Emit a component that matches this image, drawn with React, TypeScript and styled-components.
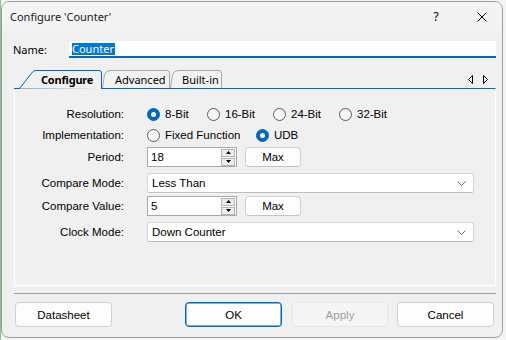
import React from 'react';
import styled, { createGlobalStyle } from 'styled-components';

const uiFont = `'Noto Sans', 'Open Sans', sans-serif`;
const formFont = `'Liberation Sans', Arial, sans-serif`;
const accent = '#0067c0';

const GlobalStyle = createGlobalStyle`
  html, body {
    margin: 0;
    padding: 0;
  }
  body {
    width: 506px;
    height: 340px;
    overflow: hidden;
    background: linear-gradient(to right, #8fbf8f 0, #8fbf8f 1px, #f4f6f4 1px);
    font-family: ${formFont};
  }
`;

const Window = styled.div`
  box-sizing: border-box;
  width: 502px;
  height: 337px;
  margin: 1px 0 0 1px;
  border: 1px solid #9a9a9a;
  border-radius: 8px;
  background: #f0f0f0;
  overflow: hidden;
  display: flex;
  flex-direction: column;
`;

const TitleBar = styled.div`
  flex: none;
  height: 29px;
  display: flex;
  align-items: center;
  padding-left: 8px;
  background: #f3f3f3;
`;

const Title = styled.div`
  flex: 1;
  font: 11px ${uiFont};
  color: #1a1a1a;
`;

const CaptionButton = styled.div<{ $mr?: number }>`
  width: 40px;
  height: 29px;
  margin-right: ${({ $mr }) => $mr ?? 0}px;
  display: flex;
  align-items: center;
  justify-content: center;
  font: 12px ${uiFont};
  color: #000;
`;

const Body = styled.div`
  flex: 1;
  display: flex;
  flex-direction: column;
  padding: 10px 6px 9px 12px;
`;

const NameRow = styled.div`
  height: 17px;
  display: flex;
  align-items: center;
`;

const NameLabel = styled.div`
  width: 55px;
  margin-left: -1px;
  font: 11px ${uiFont};
  color: #000;
`;

const NameInput = styled.div`
  box-sizing: border-box;
  flex: 1;
  height: 17px;
  margin-left: 1px;
  padding-left: 3px;
  display: flex;
  align-items: center;
  background: #fff;
  border-bottom: 2px solid ${accent};
`;

const Selected = styled.span`
  background: #0078d7;
  color: #fff;
  font: 11px ${uiFont};
  line-height: 12px;
  padding-right: 1px;
`;

const TabRow = styled.div`
  position: relative;
  z-index: 1;
  margin-top: 12px;
  height: 18px;
  display: flex;
  align-items: flex-end;
`;

const Tab = styled.div<{ $w: number; $active?: boolean; $pad: number }>`
  position: relative;
  flex: none;
  width: ${({ $w }) => $w}px;
  height: ${({ $active }) => ($active ? 19 : 18)}px;
  margin-bottom: ${({ $active }) => ($active ? -1 : 0)}px;
  padding-left: ${({ $pad }) => $pad}px;
  box-sizing: border-box;
  display: flex;
  align-items: center;
  white-space: nowrap;
  font: ${({ $active }) => ($active ? 700 : 400)} 11px ${uiFont};
  letter-spacing: ${({ $active }) => ($active ? '-0.2px' : '0')};
  color: #000;
  svg {
    position: absolute;
    left: 0;
    top: 0;
  }
  span {
    position: relative;
    margin-top: ${({ $active }) => ($active ? -1 : 1)}px;
  }
`;

const TabScroll = styled.div`
  margin-left: auto;
  margin-right: 8px;
  align-self: flex-start;
  margin-top: 5px;
  display: flex;
  gap: 10px;
`;

const Panel = styled.div`
  box-sizing: border-box;
  height: 198px;
  border: 1px solid #fff;
  border-top: 1px solid ${accent};
  padding-top: 15px;
`;

const Row = styled.div<{ $mt: number }>`
  height: 20px;
  margin-top: ${({ $mt }) => $mt}px;
  display: flex;
  align-items: center;
`;

const FieldLabel = styled.div`
  width: 109px;
  margin-right: 23px;
  text-align: right;
  font-size: 11.5px;
  color: #000;
`;

const RadioOption = styled.div<{ $w: number }>`
  width: ${({ $w }) => $w}px;
  display: flex;
  align-items: center;
  gap: 5px;
  font-size: 11.5px;
  color: #000;
`;

const RadioCircle = styled.span<{ $checked?: boolean }>`
  box-sizing: border-box;
  width: 13px;
  height: 13px;
  border-radius: 50%;
  display: flex;
  align-items: center;
  justify-content: center;
  background: ${({ $checked }) => ($checked ? accent : '#f7f7f7')};
  border: 1px solid ${({ $checked }) => ($checked ? accent : '#5a5a5a')};
  &::after {
    content: '';
    display: ${({ $checked }) => ($checked ? 'block' : 'none')};
    width: 5px;
    height: 5px;
    border-radius: 50%;
    background: #fff;
  }
`;

const SpinBox = styled.div`
  box-sizing: border-box;
  width: 90px;
  height: 20px;
  display: flex;
  align-items: center;
  background: #fff;
  border: 1px solid #a9a9a9;
  padding-left: 3px;
  font-size: 11.5px;
  color: #000;
`;

const SpinValue = styled.span`
  flex: 1;
`;

const Spinner = styled.div`
  width: 14px;
  height: 17px;
  margin-right: 1px;
  display: flex;
  flex-direction: column;
  gap: 1px;
`;

const SpinButton = styled.div`
  flex: 1;
  box-sizing: border-box;
  display: flex;
  align-items: center;
  justify-content: center;
  background: #ececec;
  border: 1px solid #b4b4b4;
`;

const SmallButton = styled.div`
  box-sizing: border-box;
  width: 56px;
  height: 20px;
  margin-left: 8px;
  display: flex;
  align-items: center;
  justify-content: center;
  background: #fdfdfd;
  border: 1px solid #d0d0d0;
  border-bottom-color: #c2c2c2;
  border-radius: 4px;
  font-size: 11.5px;
  color: #000;
`;

const Dropdown = styled.div`
  box-sizing: border-box;
  width: 327px;
  height: 20px;
  display: flex;
  align-items: center;
  padding: 0 7px 0 4px;
  background: #fff;
  border: 1px solid #d6d6d6;
  border-bottom-color: #bdbdbd;
  border-radius: 3px;
  font-size: 11.5px;
  color: #000;
  span {
    flex: 1;
  }
`;

const Separator = styled.div`
  margin-top: 7px;
  height: 1px;
  background: #a0a0a0;
`;

const ButtonRow = styled.div`
  margin-top: 8px;
  height: 25px;
  display: flex;
  padding: 0 2px 0 1px;
`;

const ButtonGroup = styled.div`
  margin-left: auto;
  display: flex;
`;

type Variant = 'default' | 'primary' | 'disabled';

const DialogButton = styled.div<{ $variant?: Variant; $w?: number; $ml?: number }>`
  box-sizing: border-box;
  width: ${({ $w }) => $w ?? 97}px;
  height: 25px;
  margin-left: ${({ $ml }) => $ml ?? 0}px;
  display: flex;
  align-items: center;
  justify-content: center;
  border-radius: 4px;
  font-size: 11.5px;
  background: ${({ $variant }) => ($variant === 'disabled' ? '#f5f5f5' : '#fdfdfd')};
  color: ${({ $variant }) => ($variant === 'disabled' ? '#a0a0a0' : '#000')};
  border: 1px solid
    ${({ $variant }) =>
      $variant === 'primary' ? accent : $variant === 'disabled' ? '#e6e6e6' : '#d0d0d0'};
  box-shadow: ${({ $variant }) => ($variant === 'primary' ? `inset 0 0 0 0.5px ${accent}` : 'none')};
`;

function TabShape({ w, active }: { w: number; active?: boolean }) {
  const r = w - 0.5;
  const d = active
    ? `M0 18.5 H5.5 L18.6 2 Q19.8 0.5 22 0.5 H${r - 2.5} Q${r} 0.5 ${r} 3 V19`
    : `M0.5 18 L2.5 5 Q3.4 1 8 0.5 H${r - 2.5} Q${r} 0.5 ${r} 3 V18`;
  return (
    <svg width={w} height={active ? 19 : 18}>
      <path
        d={d}
        fill={active ? '#f0f0f0' : '#f2f2f2'}
        stroke={active ? accent : '#a8a8a8'}
        strokeWidth={1}
      />
    </svg>
  );
}

function Chevron() {
  return (
    <svg width="9" height="5" viewBox="0 0 9 5">
      <polyline points="0.5,0.5 4.5,4.5 8.5,0.5" fill="none" stroke="#6a6a6a" strokeWidth="1" />
    </svg>
  );
}

function SpinField({ value }: { value: string }) {
  return (
    <SpinBox>
      <SpinValue>{value}</SpinValue>
      <Spinner>
        <SpinButton>
          <svg width="5" height="3" viewBox="0 0 5 3">
            <polygon points="2.5,0 5,3 0,3" fill="#000" />
          </svg>
        </SpinButton>
        <SpinButton>
          <svg width="5" height="3" viewBox="0 0 5 3">
            <polygon points="0,0 5,0 2.5,3" fill="#000" />
          </svg>
        </SpinButton>
      </Spinner>
    </SpinBox>
  );
}

const resolutions = [
  { label: '8-Bit', w: 60, checked: true },
  { label: '16-Bit', w: 66 },
  { label: '24-Bit', w: 66 },
  { label: '32-Bit', w: 66 },
];

export default function App() {
  return (
    <>
      <GlobalStyle />
      <Window>
        <TitleBar>
          <Title>Configure 'Counter'</Title>
          <CaptionButton $mr={6}>?</CaptionButton>
          <CaptionButton>
            <svg width="10" height="10" viewBox="0 0 10 10">
              <path d="M0.5 0.5 L9.5 9.5 M9.5 0.5 L0.5 9.5" stroke="#000" strokeWidth="1" />
            </svg>
          </CaptionButton>
        </TitleBar>
        <Body>
          <NameRow>
            <NameLabel>Name:</NameLabel>
            <NameInput>
              <Selected>Counter</Selected>
            </NameInput>
          </NameRow>

          <TabRow>
            <Tab $w={88} $pad={27} $active>
              <TabShape w={88} active />
              <span>Configure</span>
            </Tab>
            <Tab $w={68} $pad={13}>
              <TabShape w={68} />
              <span>Advanced</span>
            </Tab>
            <Tab $w={52} $pad={12}>
              <TabShape w={52} />
              <span>Built-in</span>
            </Tab>
            <TabScroll>
              <svg width="5" height="9" viewBox="0 0 5 9">
                <polygon points="4.5,0.5 0.5,4.5 4.5,8.5" fill="none" stroke="#000" strokeWidth="1" />
              </svg>
              <svg width="5" height="9" viewBox="0 0 5 9">
                <polygon points="0.5,0.5 4.5,4.5 0.5,8.5" fill="none" stroke="#000" strokeWidth="1" />
              </svg>
            </TabScroll>
          </TabRow>

          <Panel>
            <Row $mt={0}>
              <FieldLabel>Resolution:</FieldLabel>
              {resolutions.map((r) => (
                <RadioOption key={r.label} $w={r.w}>
                  <RadioCircle $checked={r.checked} />
                  {r.label}
                </RadioOption>
              ))}
            </Row>
            <Row $mt={1}>
              <FieldLabel>Implementation:</FieldLabel>
              <RadioOption $w={109}>
                <RadioCircle />
                Fixed Function
              </RadioOption>
              <RadioOption $w={60}>
                <RadioCircle $checked />
                UDB
              </RadioOption>
            </Row>
            <Row $mt={2}>
              <FieldLabel>Period:</FieldLabel>
              <SpinField value="18" />
              <SmallButton>Max</SmallButton>
            </Row>
            <Row $mt={6}>
              <FieldLabel>Compare Mode:</FieldLabel>
              <Dropdown>
                <span>Less Than</span>
                <Chevron />
              </Dropdown>
            </Row>
            <Row $mt={3}>
              <FieldLabel>Compare Value:</FieldLabel>
              <SpinField value="5" />
              <SmallButton>Max</SmallButton>
            </Row>
            <Row $mt={6}>
              <FieldLabel>Clock Mode:</FieldLabel>
              <Dropdown>
                <span>Down Counter</span>
                <Chevron />
              </Dropdown>
            </Row>
          </Panel>

          <Separator />

          <ButtonRow>
            <DialogButton>Datasheet</DialogButton>
            <ButtonGroup>
              <DialogButton $variant="primary">OK</DialogButton>
              <DialogButton $variant="disabled" $w={96} $ml={10}>
                Apply
              </DialogButton>
              <DialogButton $ml={9}>Cancel</DialogButton>
            </ButtonGroup>
          </ButtonRow>
        </Body>
      </Window>
    </>
  );
}
